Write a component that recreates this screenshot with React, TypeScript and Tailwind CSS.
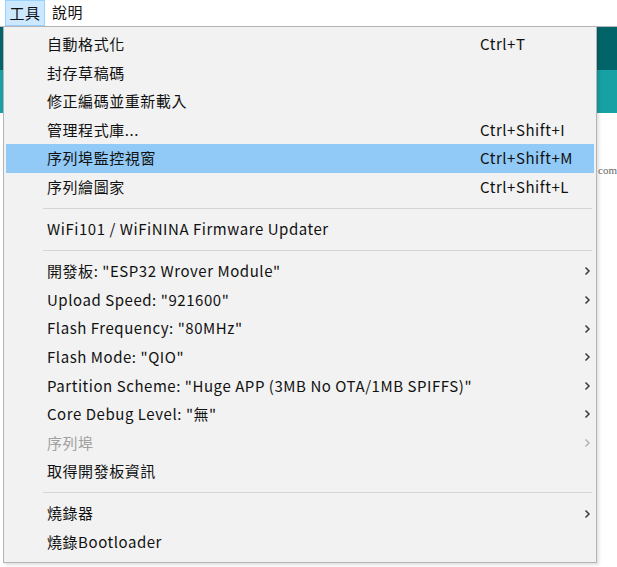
import React from 'react';

type Entry =
  | { sep: true }
  | { sep?: false; label: string; shortcut?: string; sub?: boolean; active?: boolean; disabled?: boolean };

const entries: Entry[] = [
  { label: '自動格式化', shortcut: 'Ctrl+T' },
  { label: '封存草稿碼' },
  { label: '修正編碼並重新載入' },
  { label: '管理程式庫...', shortcut: 'Ctrl+Shift+I' },
  { label: '序列埠監控視窗', shortcut: 'Ctrl+Shift+M', active: true },
  { label: '序列繪圖家', shortcut: 'Ctrl+Shift+L' },
  { sep: true },
  { label: 'WiFi101 / WiFiNINA Firmware Updater' },
  { sep: true },
  { label: '開發板: "ESP32 Wrover Module"', sub: true },
  { label: 'Upload Speed: "921600"', sub: true },
  { label: 'Flash Frequency: "80MHz"', sub: true },
  { label: 'Flash Mode: "QIO"', sub: true },
  { label: 'Partition Scheme: "Huge APP (3MB No OTA/1MB SPIFFS)"', sub: true },
  { label: 'Core Debug Level: "無"', sub: true },
  { label: '序列埠', sub: true, disabled: true },
  { label: '取得開發板資訊' },
  { sep: true },
  { label: '燒錄器', sub: true },
  { label: '燒錄Bootloader' },
];

const Chevron = ({ disabled }: { disabled?: boolean }) => (
  <svg width="7" height="10" viewBox="0 0 7 10" className="ml-auto">
    <polyline
      points="1.5,1.5 5,5 1.5,8.5"
      fill="none"
      stroke={disabled ? '#b5b5b5' : '#3c3c3c'}
      strokeWidth="1.5"
    />
  </svg>
);

const App = () => {
  return (
    <div className="relative w-[617px] h-[567px] overflow-hidden bg-white font-['Noto_Sans_CJK_TC',sans-serif] text-[15px] tracking-[0.55px] text-[#111]">
      {/* menu bar */}
      <div className="flex items-stretch h-[27px] border-b border-[#b9b9b9] bg-white">
        <div className="ml-[5px] w-[40px] h-[26px] flex items-center justify-center bg-[#cce8ff] border border-[#99d1ff]">
          工具
        </div>
        <div className="ml-[7px] flex items-center pb-px">說明</div>
      </div>

      {/* window behind the menu */}
      <div className="flex flex-col">
        <div className="h-[43px] bg-[#006468]" />
        <div className="h-[43px] bg-[#17a1a5]" />
        <div className="h-[52px]" />
        <div className="pl-[598px] text-[11px] tracking-normal leading-none text-[#666] font-['Liberation_Serif',serif]">com</div>
      </div>

      {/* open menu */}
      <div className="absolute left-[3px] top-[26px] w-[594px] border border-[#b4b4b4] bg-[#f2f2f2] pt-[3px] pb-[5px] px-[2px] shadow-[2px_2px_3px_rgba(0,0,0,0.12)]">
        {entries.map((e, i) =>
          e.sep ? (
            <div key={i} className="h-[13.5px] flex items-center">
              <div className="ml-[37px] mr-[2px] flex-1 h-px bg-[#d5d5d5]" />
            </div>
          ) : (
            <div
              key={i}
              className={`h-[28.6px] flex items-center pl-[41px] pr-[3px] ${e.active ? 'bg-[#91c9f7]' : ''} ${
                e.disabled ? 'text-[#a0a0a0]' : ''
              }`}
            >
              <span className="w-[433px] shrink-0 whitespace-nowrap">{e.label}</span>
              {e.shortcut && <span className="whitespace-nowrap">{e.shortcut}</span>}
              {e.sub && <Chevron disabled={e.disabled} />}
            </div>
          )
        )}
      </div>
    </div>
  );
};

export default App;
